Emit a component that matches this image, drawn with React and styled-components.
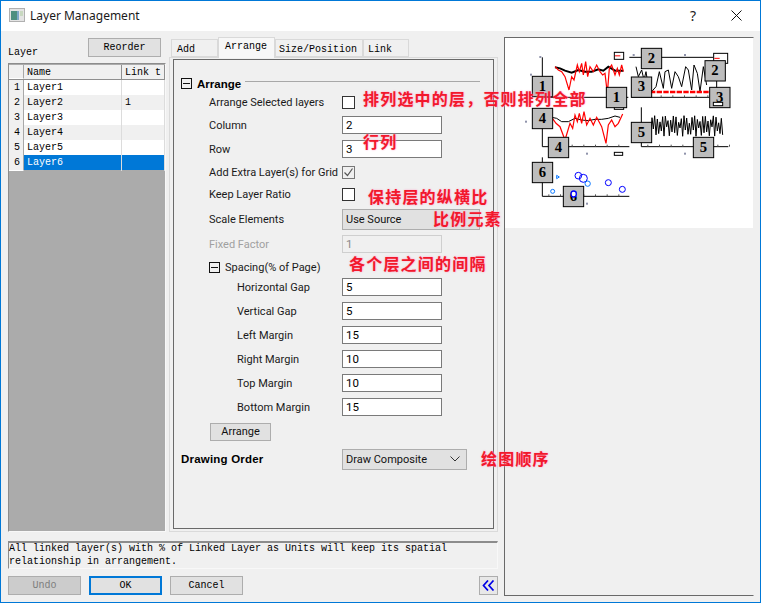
import styled, { createGlobalStyle } from "styled-components";

const GlobalStyle = createGlobalStyle`
  html, body {
    margin: 0;
    padding: 0;
    background: #f0f0f0;
  }
`;

const MONO = `"Liberation Mono", monospace`;
const UI = `Roboto, "Liberation Sans", sans-serif`;

const Window = styled.div`
  position: relative;
  box-sizing: border-box;
  width: 761px;
  height: 603px;
  border: 1px solid #0078d7;
  background: #f0f0f0;
  overflow: hidden;
  font-family: ${UI};
`;

const TitleBar = styled.div`
  display: flex;
  align-items: center;
  box-sizing: border-box;
  height: 30px;
  background: #fff;
  padding: 0 0 2px 8px;
`;

const TitleText = styled.span`
  margin-left: 5px;
  font: 12px "Noto Sans", sans-serif;
  color: #1a1a1a;
  flex: 1;
`;

const HelpGlyph = styled.span`
  width: 14px;
  margin-right: 31px;
  font: 14px "Noto Sans", sans-serif;
  color: #222;
  text-align: center;
`;

const CloseIcon = styled.svg`
  width: 11px;
  height: 11px;
  margin-right: 18px;
`;

const Body = styled.div`
  display: flex;
  padding: 6px 0 0 7px;
`;

const LeftArea = styled.div`
  width: 490px;
`;

const TopRow = styled.div`
  display: flex;
  height: 495px;
`;

const LayerCol = styled.div`
  display: flex;
  flex-direction: column;
  width: 158px;
`;

const LayerHead = styled.div`
  display: flex;
  justify-content: space-between;
  align-items: flex-end;
  height: 26px;
  padding-top: 1px;
  box-sizing: border-box;
  font: 10px ${MONO};
  color: #000;
`;

const LayerLabel = styled.span`
  position: relative;
  top: -5px;
`;

const Reorder = styled.div`
  width: 73px;
  height: 19px;
  margin: 0 5px 6px 0;
  box-sizing: border-box;
  border: 1px solid #adadad;
  background: #e1e1e1;
  font: 10px/17px ${MONO};
  text-align: center;
`;

const Sheet = styled.div`
  flex: 1;
  box-sizing: border-box;
  border: 1px solid #8c8c8c;
  border-right-color: #f8f8f8;
  border-bottom-color: #f8f8f8;
  background: #ababab;
  padding-top: 1px;
`;

const SheetRow = styled.div`
  display: grid;
  grid-template-columns: 15px 98px 43px;
  height: 15px;
  box-sizing: border-box;
  background: ${(p) => (p.$selected ? "#0078d7" : p.$odd ? "#f0f0f0" : "#fff")};
  color: ${(p) => (p.$selected ? "#fff" : "#000")};
  font: 10px/15px ${MONO};
`;

const HeadRow = styled(SheetRow)`
  background: #f0f0f0;
  border-bottom: 1px solid #8f8f8f;
  line-height: 15px;
`;

const RowNum = styled.div`
  background: #f0f0f0;
  color: #000;
  text-align: right;
  padding-right: 3px;
  border-bottom: 1px solid #fff;
  border-right: 1px solid #a8a8a8;
`;

const Cell = styled.div`
  padding-left: 3px;
  overflow: hidden;
  white-space: nowrap;
  border-right: 1px solid ${(p) => (p.$head ? "#8f8f8f" : "#dcdcdc")};
`;

const MiddleCol = styled.div`
  display: flex;
  flex-direction: column;
  width: 329px;
  margin-left: 3px;
`;

const Tabs = styled.div`
  display: flex;
  height: 20px;
  padding-left: 2px;
  align-items: flex-end;
`;

const Tab = styled.div`
  box-sizing: border-box;
  width: ${(p) => p.$w}px;
  height: ${(p) => (p.$active ? 21 : 18)}px;
  margin-bottom: ${(p) => (p.$active ? -1 : 0)}px;
  padding-left: ${(p) => p.$pad}px;
  border: 1px solid #d9d9d9;
  border-bottom: ${(p) => (p.$active ? "none" : "1px solid #d9d9d9")};
  background: ${(p) => (p.$active ? "#f7f7f7" : "#f0f0f0")};
  font: 10px/${(p) => (p.$active ? 17 : 19)}px ${MONO};
  white-space: nowrap;
  position: relative;
  z-index: ${(p) => (p.$active ? 1 : 0)};
`;

const OuterPane = styled.div`
  flex: 1;
  box-sizing: border-box;
  border: 1px solid #dadada;
  padding: 1px 3px 2px 3px;
`;

const InnerPane = styled.div`
  box-sizing: border-box;
  height: 100%;
  width: 321px;
  border: 1px solid #696969;
  padding: 16px 0 0 7px;
`;

const SectionHead = styled.div`
  display: flex;
  align-items: center;
  height: 15px;
  font: bold 11.5px "Liberation Sans", sans-serif;
  color: #000;
`;

const Toggle = styled.div`
  position: relative;
  flex: none;
  width: 11px;
  height: 11px;
  box-sizing: border-box;
  border: 1px solid #111;
  margin-right: ${(p) => p.$gap}px;
  &::after {
    content: "";
    position: absolute;
    left: 1px;
    right: 1px;
    top: 4px;
    height: 1px;
    background: #111;
  }
`;

const SectionRule = styled.div`
  flex: none;
  width: 235px;
  height: 1px;
  background: #a8a8a8;
  margin: -5px 0 0 4px;
`;

const Row = styled.div`
  display: grid;
  grid-template-columns: 161px 1fr;
  align-items: center;
  height: ${(p) => p.$h}px;
  margin-top: ${(p) => p.$mt || 0}px;
`;

const Label = styled.div`
  display: flex;
  align-items: center;
  padding-left: ${(p) => p.$indent ?? 28}px;
  font: 11px ${UI};
  color: ${(p) => (p.$dim ? "#a0a0a0" : "#1a1a1a")};
  white-space: nowrap;
`;

const BoldLabel = styled.div`
  font: bold 11.5px "Liberation Sans", sans-serif;
  letter-spacing: 0.2px;
  color: #000;
  white-space: nowrap;
`;

const TextBox = styled.div`
  box-sizing: border-box;
  width: 100px;
  height: 18px;
  border: 1px solid ${(p) => (p.$off ? "#cfcfcf" : "#7a7a7a")};
  background: ${(p) => (p.$off ? "#f0f0f0" : "#fff")};
  color: ${(p) => (p.$off ? "#8a8a8a" : "#000")};
  font: 11.5px/16px ${UI};
  padding-left: 3px;
`;

const Check = styled.div`
  box-sizing: border-box;
  width: 13px;
  height: 13px;
  border: 1px solid ${(p) => (p.$on ? "#777" : "#333")};
  background: ${(p) => (p.$on ? "#f0f0f0" : "#fff")};
  display: flex;
  align-items: center;
  justify-content: center;
`;

const Combo = styled.div`
  display: flex;
  align-items: center;
  justify-content: space-between;
  box-sizing: border-box;
  width: ${(p) => p.$w}px;
  height: 21px;
  border: 1px solid #adadad;
  background: #e1e1e1;
  font: 11px ${UI};
  color: #111;
  padding: 0 6px 0 3px;
`;

const FormButton = styled.div`
  box-sizing: border-box;
  width: 61px;
  height: 18px;
  margin-left: 29px;
  border: 1px solid #adadad;
  background: #e1e1e1;
  font: 11px/16px ${UI};
  color: #111;
  text-align: center;
`;

const Hint = styled.div`
  box-sizing: border-box;
  height: 28px;
  margin-top: 9px;
  border: 1px solid #f8f8f8;
  border-top: 2px solid #8c8c8c;
  border-left: 1px solid #8c8c8c;
  font: 10px/12.5px ${MONO};
  color: #000;
`;

const BottomBar = styled.div`
  display: flex;
  gap: 8px;
  margin-top: 7px;
`;

const DlgButton = styled.div`
  box-sizing: border-box;
  width: 73px;
  height: 19px;
  border: ${(p) => (p.$default ? "2px solid #0078d7" : "1px solid #adadad")};
  background: ${(p) => (p.$disabled ? "#cccccc" : "#e1e1e1")};
  color: ${(p) => (p.$disabled ? "#7e7e7e" : "#000")};
  font: 10px/${(p) => (p.$default ? 15 : 17)}px ${MONO};
  text-align: center;
`;

const Collapse = styled.div`
  display: flex;
  align-items: center;
  justify-content: center;
  box-sizing: border-box;
  width: 19px;
  height: 19px;
  margin-left: auto;
  border: 1px solid #adadad;
  background: #e8e8e8;
`;

const Preview = styled.div`
  box-sizing: border-box;
  width: 250px;
  height: 559px;
  margin-left: 6px;
  border: 1px solid #696969;
  border-right-color: #f0f0f0;
  background: #f0f0f0;
`;

const PreviewSvg = styled.svg`
  display: block;
  background: #fff;
`;

const Note = styled.div`
  position: absolute;
  left: ${(p) => p.$x}px;
  top: ${(p) => p.$y}px;
  font: bold 16px "Noto Sans CJK SC", sans-serif;
  line-height: 20px;
  letter-spacing: 1.2px;
  color: #f2182c;
  text-shadow: 0 0 2px #ff9ac4;
  white-space: nowrap;
`;

const layers = [
  { id: 1, name: "Layer1", link: "" },
  { id: 2, name: "Layer2", link: "1" },
  { id: 3, name: "Layer3", link: "" },
  { id: 4, name: "Layer4", link: "" },
  { id: 5, name: "Layer5", link: "" },
  { id: 6, name: "Layer6", link: "", selected: true },
];

const gaps = [
  ["Horizontal Gap", "5"],
  ["Vertical Gap", "5"],
  ["Left Margin", "15"],
  ["Right Margin", "10"],
  ["Top Margin", "10"],
  ["Bottom Margin", "15"],
];

const notes = [
  [362, 87, "排列选中的层，否则排列全部"],
  [362, 130, "行列"],
  [367, 185, "保持层的纵横比"],
  [432, 207, "比例元素"],
  [348, 252, "各个层之间的间隔"],
  [480, 447, "绘图顺序"],
];

// preview coordinates are 3x page pixels, offset from (500, 30)
const boxes = [
  [97, 139, "1"],
  [319, 172, "1"],
  [424, 55, "2"],
  [615, 92, "2"],
  [394, 141, "3"],
  [629, 172, "3"],
  [97, 235, "4"],
  [145, 322, "4"],
  [394, 277, "5"],
  [580, 322, "5"],
  [97, 397, "6"],
  [190, 469, "6"],
];

const red1 = "165,110 175,120 185,125 195,140 207,180 215,140 222,150 232,105 238,125 245,100 250,135 257,95 263,140 270,110 280,125 290,105 300,125 308,135 315,130 322,190 328,115 335,105 345,135 352,115 358,135 365,105 370,125";
const black1 = "165,112 180,115 195,122 215,128 235,120 255,125 275,125 295,118 310,122 325,110 345,122 370,122";
const red4 = "155,262 168,280 180,290 195,330 210,280 218,295 225,255 232,275 238,250 245,280 252,245 260,285 270,265 280,285 290,262 305,290 318,340 325,285 335,270 345,290 355,280 368,252";
const black4 = "155,262 170,265 185,275 205,275 225,265 245,270 265,272 285,268 305,268 325,265 345,258 360,262";
const black3 = "408,110 415,140 425,120 432,150 438,125 445,170 455,185 468,170 478,125 490,175 495,125 505,120 515,175 525,125 535,140 545,170 557,110 565,120 575,180 582,105 592,130 600,185 610,110 620,165";
const black5 = Array.from({ length: 28 }, (_, i) => {
  const up = 4 + 24 * Math.abs(Math.sin(i * 2.3));
  const down = 4 + 30 * Math.abs(Math.cos(i * 1.3));
  return `${448 + i * 8},${285 - up} ${452 + i * 8},${285 + down}`;
}).join(" ");

const axes = [
  [127, 82, 127, 202],
  [127, 202, 385, 202],
  [388, 82, 640, 82],
  [394, 202, 628, 202],
  [127, 240, 127, 350],
  [127, 350, 388, 350],
  [424, 232, 424, 350],
  [424, 350, 685, 350],
  [127, 382, 127, 499],
  [127, 499, 388, 499],
  [650, 150, 650, 215],
];

const ticks = [
  [127, 350, 7],
  [424, 350, 8],
  [127, 499, 7],
  [394, 202, 7],
];

const legends = [
  [343, 67, 28, 21],
  [343, 218, 28, 20],
  [343, 367, 25, 9],
  [641, 70, 42, 30],
];

const LayerPreview = () => (
  <PreviewSvg width="248" height="190" viewBox="15 24 744 570">
    {axes.map(([x1, y1, x2, y2], i) => (
      <line key={i} x1={x1} y1={y1} x2={x2} y2={y2} stroke="#000" strokeWidth="3" />
    ))}
    {ticks.map(([x, y, n]) =>
      Array.from({ length: n }, (_, i) => (
        <rect key={`${x}-${y}-${i}`} x={x + 18 + i * 35} y={y - 6} width="3" height="6" fill="#555" />
      ))
    )}
    {[[90, 131], [75, 272], [258, 368], [258, 518], [102, 440], [405, 293], [552, 368], [552, 72], [118, 78], [398, 72]].map(([x, y]) => (
      <rect key={`${x}-${y}`} x={x} y={y} width="6" height="6" fill="#8f93ab" />
    ))}
    <polyline points={black1} fill="none" stroke="#000" strokeWidth="6" />
    <polyline points={red1} fill="none" stroke="#f00" strokeWidth="3.6" />
    <polyline points={black3} fill="none" stroke="#000" strokeWidth="3" />
    <line x1="450" y1="186" x2="640" y2="186" stroke="#f00" strokeWidth="7" strokeDasharray="16 4" />
    <polyline points={black4} fill="none" stroke="#000" strokeWidth="3" />
    <polyline points={red4} fill="none" stroke="#f00" strokeWidth="3.6" />
    <polyline points={black5} fill="none" stroke="#000" strokeWidth="3" />
    <g fill="none" stroke="#0000ff" strokeWidth="3">
      <circle cx="235" cy="437" r="10" />
      <circle cx="250" cy="445" r="12" />
      <circle cx="325" cy="458" r="9" />
      <circle cx="367" cy="478" r="9" />
    </g>
    <g fill="none" stroke="#0a78ff" strokeWidth="3">
      <circle cx="263" cy="461" r="8" />
      <circle cx="158" cy="484" r="6" />
      <polygon points="170,436 178,441 170,446" />
    </g>
    <rect x="150" y="427" width="5" height="6" fill="#18d8f0" />
    {legends.map(([x, y, w, h]) => (
      <g key={`${x}-${y}`}>
        <rect x={x} y={y} width={w} height={h} fill="#fff" stroke="#000" strokeWidth="3" />
        {h > 15 && <line x1={x + 2} y1={y + h / 2} x2={x + 18} y2={y + h / 2} stroke="#f00" strokeWidth="3" />}
      </g>
    ))}
    {boxes.map(([x, y, n], i) => (
      <g key={i}>
        <rect x={x} y={y} width="61" height="61" fill="#bdbdbd" stroke="#000" strokeWidth="3" />
        <text
          x={x + 30}
          y={y + 43}
          textAnchor="middle"
          fontFamily="Liberation Serif, serif"
          fontWeight="bold"
          fontSize="44"
          fill="#000"
        >
          {n}
        </text>
      </g>
    ))}
    <rect x="640" y="217" width="28" height="10" fill="#fff" stroke="#000" strokeWidth="3" />
    <ellipse cx="221" cy="492" rx="8" ry="9" fill="#fff" stroke="#0000ff" strokeWidth="4" />
  </PreviewSvg>
);

export default function App() {
  return (
    <>
      <GlobalStyle />
      <Window>
        <TitleBar>
          <svg width="16" height="14" viewBox="0 0 16 14">
            <rect x="0.5" y="0.5" width="15" height="13" fill="#e4e4e4" stroke="#b0b0b0" />
            <rect x="2" y="3" width="6" height="9" fill="#4f8f80" />
            <rect x="8" y="3" width="2" height="9" fill="#7fa8c8" />
            <rect x="11" y="3" width="3" height="5" fill="#c8d8c0" />
          </svg>
          <TitleText>Layer Management</TitleText>
          <HelpGlyph>?</HelpGlyph>
          <CloseIcon viewBox="0 0 11 11">
            <path d="M0.5 0.5 L10.5 10.5 M10.5 0.5 L0.5 10.5" stroke="#111" strokeWidth="1" />
          </CloseIcon>
        </TitleBar>
        <Body>
          <LeftArea>
            <TopRow>
              <LayerCol>
                <LayerHead>
                  <LayerLabel>Layer</LayerLabel>
                  <Reorder>Reorder</Reorder>
                </LayerHead>
                <Sheet>
                  <HeadRow>
                    <RowNum />
                    <Cell $head>Name</Cell>
                    <Cell $head>Link t</Cell>
                  </HeadRow>
                  {layers.map((layer, i) => (
                    <SheetRow key={layer.id} $odd={i % 2 === 1} $selected={layer.selected}>
                      <RowNum>{layer.id}</RowNum>
                      <Cell>{layer.name}</Cell>
                      <Cell>{layer.link}</Cell>
                    </SheetRow>
                  ))}
                </Sheet>
              </LayerCol>
              <MiddleCol>
                <Tabs>
                  <Tab $w={47} $pad={5}>Add</Tab>
                  <Tab $w={57} $pad={6} $active>Arrange</Tab>
                  <Tab $w={88} $pad={3}>Size/Position</Tab>
                  <Tab $w={46} $pad={4}>Link</Tab>
                </Tabs>
                <OuterPane>
                  <InnerPane>
                    <SectionHead>
                      <Toggle $gap={5} />
                      Arrange
                      <SectionRule />
                    </SectionHead>
                    <Row $h={22}>
                      <Label>Arrange Selected layers</Label>
                      <Check />
                    </Row>
                    <Row $h={24}>
                      <Label>Column</Label>
                      <TextBox>2</TextBox>
                    </Row>
                    <Row $h={24}>
                      <Label>Row</Label>
                      <TextBox>3</TextBox>
                    </Row>
                    <Row $h={22}>
                      <Label>Add Extra Layer(s) for Grid</Label>
                      <Check $on>
                        <svg width="11" height="11" viewBox="0 0 11 11">
                          <path d="M1.5 5.5 L4.5 8.5 L9.5 1.5" fill="none" stroke="#555" strokeWidth="1.2" />
                        </svg>
                      </Check>
                    </Row>
                    <Row $h={22}>
                      <Label>Keep Layer Ratio</Label>
                      <Check />
                    </Row>
                    <Row $h={28}>
                      <Label>Scale Elements</Label>
                      <Combo $w={138}>Use Source</Combo>
                    </Row>
                    <Row $h={22}>
                      <Label $dim>Fixed Factor</Label>
                      <TextBox $off>1</TextBox>
                    </Row>
                    <Row $h={16} $mt={4}>
                      <Label>
                        <Toggle $gap={5} />
                        Spacing(% of Page)
                      </Label>
                    </Row>
                    {gaps.map(([name, value]) => (
                      <Row key={name} $h={24}>
                        <Label $indent={56}>{name}</Label>
                        <TextBox>{value}</TextBox>
                      </Row>
                    ))}
                    <Row $h={26}>
                      <FormButton>Arrange</FormButton>
                    </Row>
                    <Row $h={28}>
                      <BoldLabel>Drawing Order</BoldLabel>
                      <Combo $w={125}>
                        Draw Composite
                        <svg width="10" height="6" viewBox="0 0 10 6">
                          <path d="M0.5 0.5 L5 5 L9.5 0.5" fill="none" stroke="#333" strokeWidth="1" />
                        </svg>
                      </Combo>
                    </Row>
                  </InnerPane>
                </OuterPane>
              </MiddleCol>
            </TopRow>
            <Hint>
              All linked layer(s) with % of Linked Layer as Units will keep its spatial
              <br />
              relationship in arrangement.
            </Hint>
            <BottomBar>
              <DlgButton $disabled>Undo</DlgButton>
              <DlgButton $default>OK</DlgButton>
              <DlgButton>Cancel</DlgButton>
              <Collapse>
                <svg width="13" height="11" viewBox="0 0 13 11">
                  <path d="M6 0.5 L1.5 5.5 L6 10.5 M11.5 0.5 L7 5.5 L11.5 10.5" fill="none" stroke="#0000e6" strokeWidth="1.7" />
                </svg>
              </Collapse>
            </BottomBar>
          </LeftArea>
          <Preview>
            <LayerPreview />
          </Preview>
        </Body>
        {notes.map(([x, y, text]) => (
          <Note key={text} $x={x} $y={y}>{text}</Note>
        ))}
      </Window>
    </>
  );
}
